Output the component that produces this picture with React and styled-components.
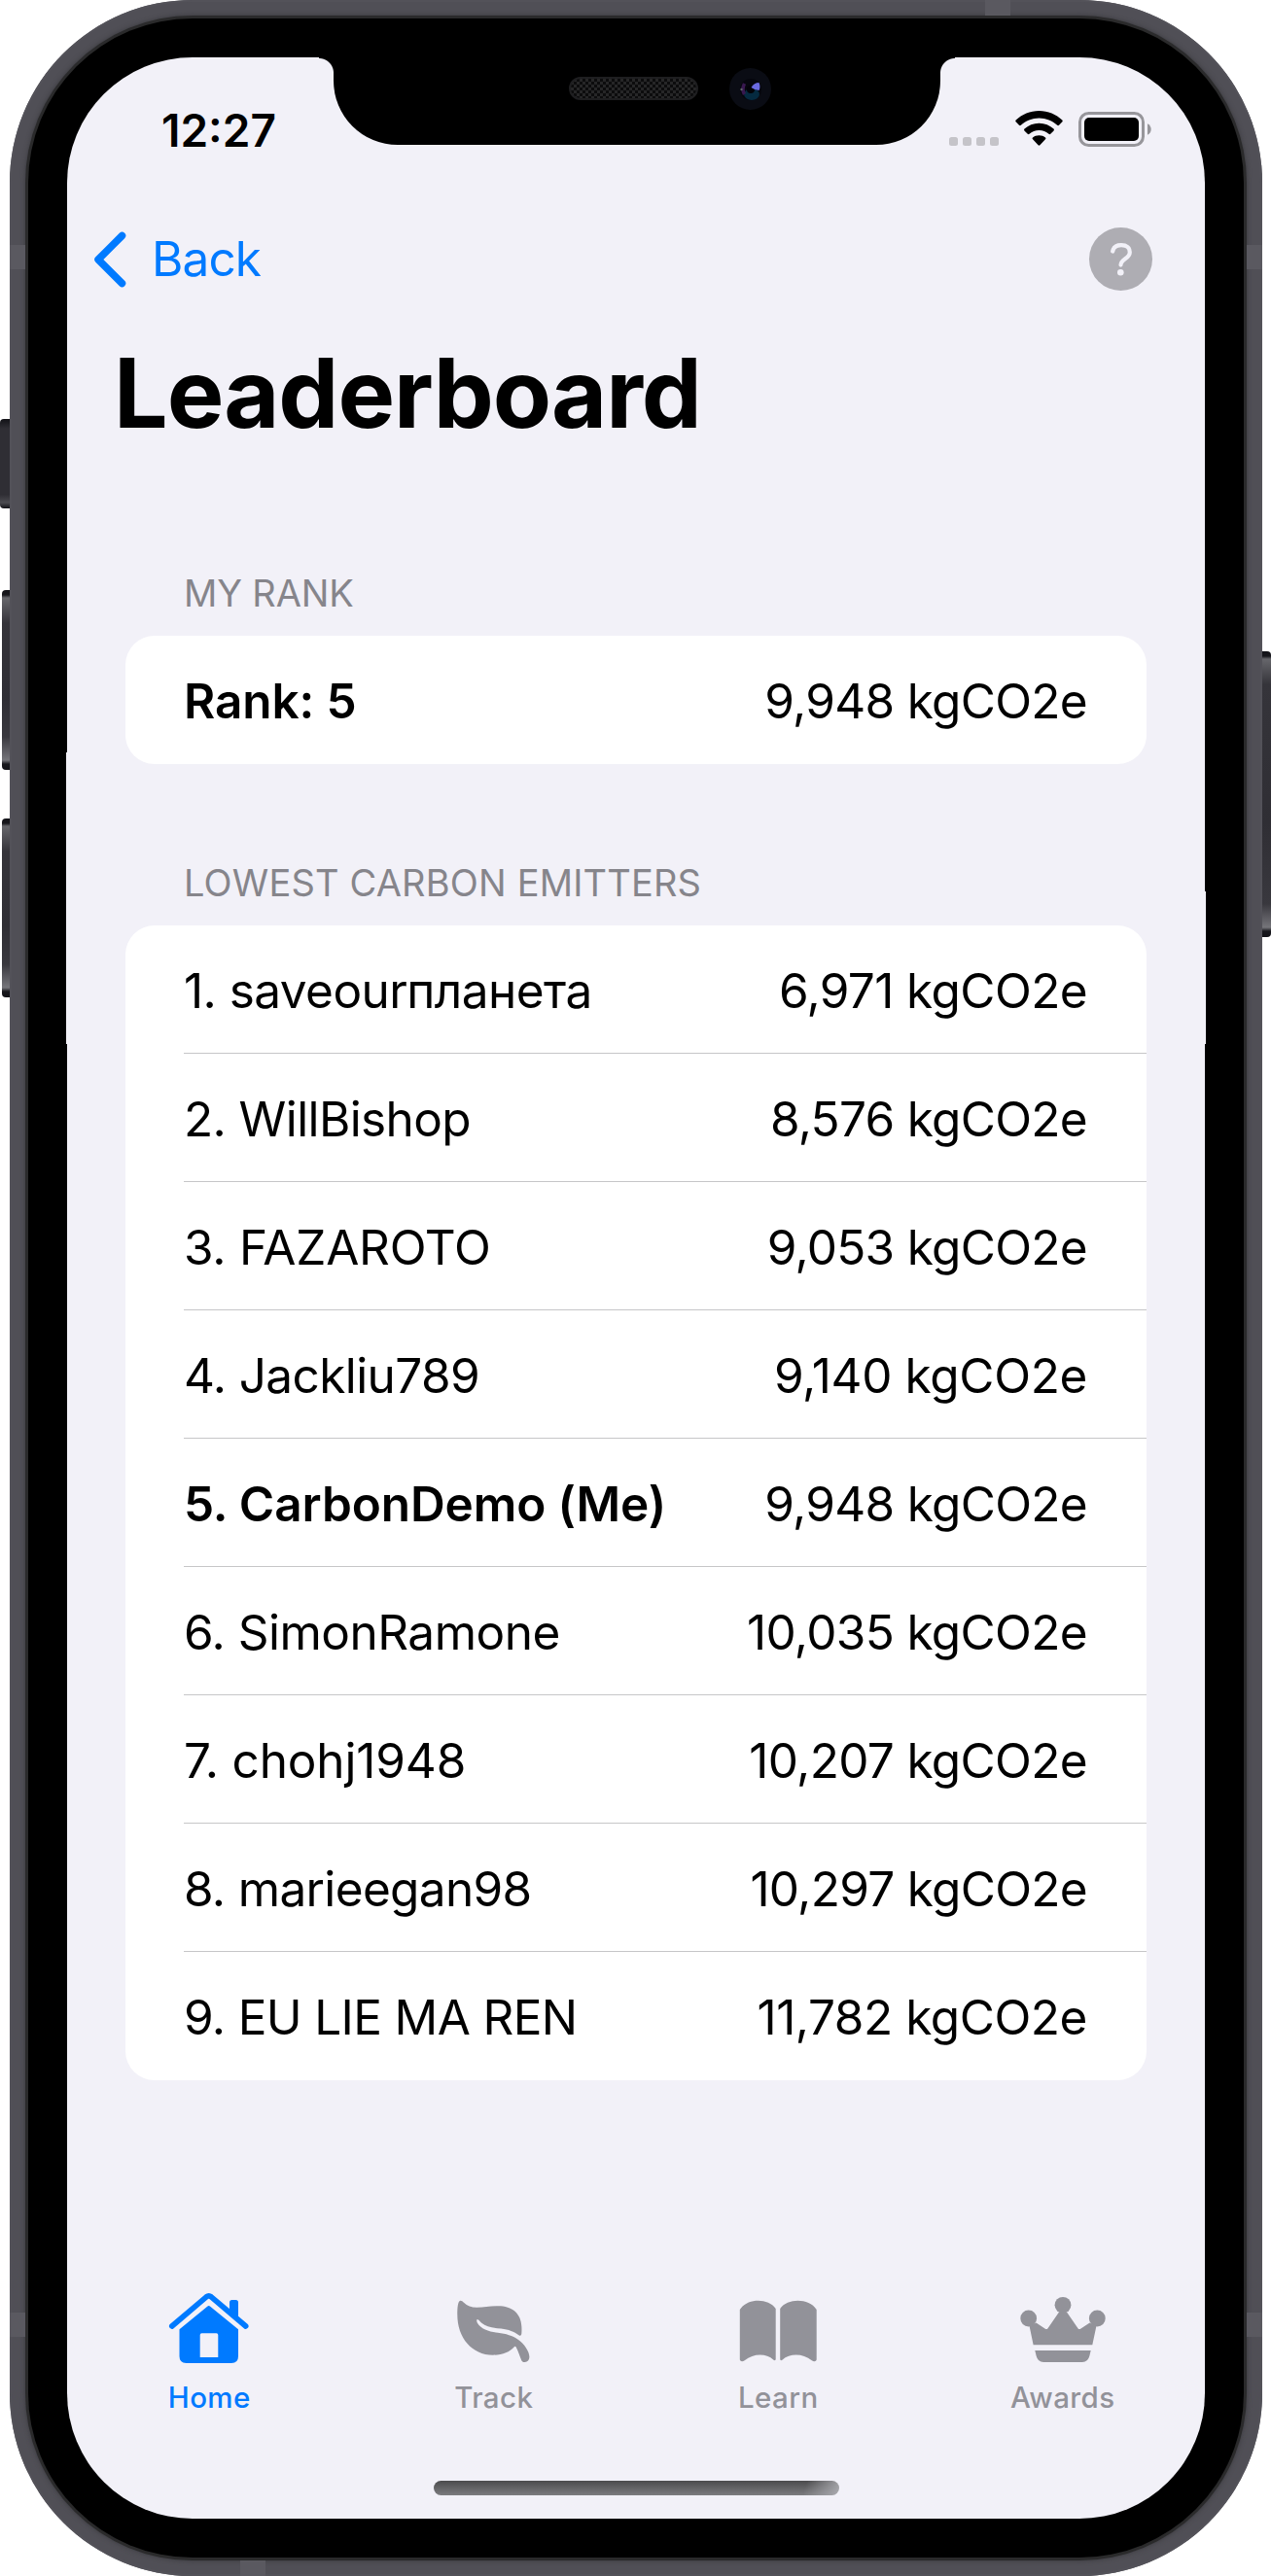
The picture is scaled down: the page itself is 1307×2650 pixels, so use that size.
import React from 'react';
import styled, { createGlobalStyle } from 'styled-components';

const GlobalStyle = createGlobalStyle`
  * { box-sizing: border-box; }
  body { margin: 0; background: #fff; font-family: Inter, "Liberation Sans", sans-serif; color: #000; }
  svg { display: block; }
`;

const Device = styled.div`
  position: relative;
  width: 1307px;
  height: 2650px;
  padding: 0 9px 0 10px;
  overflow: hidden;
`;

const SideButton = styled.span`
  position: absolute;
  top: ${(p) => p.$top}px;
  height: ${(p) => p.$height}px;
  width: ${(p) => p.$width}px;
  ${(p) => (p.$right ? 'right: 0; border-radius: 0 4px 4px 0;' : `left: ${11 - p.$width}px; border-radius: 4px 0 0 4px;`)}
  background: linear-gradient(180deg, #121217 0, #17171c 5px, #66666b 8px, #35343a 34px, #2f2e34 60%, #39383e calc(100% - 34px), #75757a calc(100% - 10px), #17171c calc(100% - 6px), #121217 100%);
  ${(p) => p.$flat && 'background: linear-gradient(180deg, #121217 0, #2f2e34 10px, #2f2e34 calc(100% - 14px), #4b4b50 calc(100% - 6px), #121217 100%);'}
`;

const Frame = styled.div`
  position: relative;
  height: 2650px;
  padding: 16px;
  border-radius: 188px;
  background: #504f56;
  box-shadow: inset 0 0 0 2px #535259;
`;

const Antenna = styled.span`
  position: absolute;
  background: #5a5960;
  ${(p) => (p.$edge === 'top' || p.$edge === 'bottom' ? 'width: 26px; height: 16px;' : 'width: 16px; height: 25px;')}
  ${(p) => p.$edge}: 0;
  ${(p) => (p.$edge === 'top' || p.$edge === 'bottom' ? 'left' : 'top')}: ${(p) => p.$at}px;
`;

const Rim = styled.div`
  height: 100%;
  padding: 3px;
  border-radius: 172px;
  background: #2a2a2b;
  box-shadow: 0 0 5px #38383c;
`;

const Bezel = styled.div`
  height: 100%;
  padding: 40px;
  border-radius: 169px;
  background: #000;
`;

const Screen = styled.main`
  position: relative;
  height: 100%;
  border-radius: 129px;
  background: #f2f1f8;
  display: flex;
  flex-direction: column;
  &::before, &::after {
    content: '';
    position: absolute;
    width: 1px;
    background: #f2f1f8;
  }
  &::before { left: -1px; top: 715px; height: 300px; }
  &::after { right: -1px; top: 858px; height: 157px; }
`;

const Notch = styled.div`
  position: absolute;
  top: 0;
  left: 274px;
  width: 624px;
  height: 90px;
  border-radius: 0 0 66px 66px;
  background: #000;
  &::before, &::after {
    content: '';
    position: absolute;
    top: 0;
    width: 15px;
    height: 16px;
  }
  &::before { left: -15px; background: radial-gradient(circle at 0 100%, transparent 14.5px, #000 15.5px); }
  &::after { right: -15px; background: radial-gradient(circle at 100% 100%, transparent 14.5px, #000 15.5px); }
`;

const Speaker = styled.span`
  position: absolute;
  left: 242px;
  top: 20px;
  width: 133px;
  height: 24px;
  border-radius: 12px;
  border: 2px solid #1e1e20;
  background: repeating-conic-gradient(#262627 0 25%, #0c0c0d 0 50%) 0 0 / 6px 6px;
`;

const Camera = styled.svg`
  position: absolute;
  left: 407px;
  top: 11px;
`;

const StatusBar = styled.header`
  height: 149px;
  padding: 55px 55px 0 97px;
  display: flex;
  justify-content: space-between;
`;

const Time = styled.time`
  margin-top: 2px;
  height: 36px;
  line-height: 36px;
  font-size: 46px;
  font-weight: 600;
  letter-spacing: 0;
`;

const StatusIcons = styled.div`
  display: flex;
  height: 38px;
  align-items: flex-start;
`;

const Gap = styled.span`
  width: 16px;
`;

const NavBar = styled.nav`
  height: 117px;
  padding: 0 54px 0 26px;
  display: flex;
  align-items: center;
  justify-content: space-between;
`;

const BackLink = styled.div`
  display: flex;
  align-items: center;
  gap: 26px;
  margin-bottom: 2px;
  color: #007aff;
  font-size: 49.5px;
  letter-spacing: -0.9px;
  line-height: 60px;
`;

const HelpButton = styled.div`
  width: 65px;
  height: 65px;
  border-radius: 50%;
  background: #aeadb3;
  display: grid;
  place-items: center;
`;

const Title = styled.h1`
  margin: 20px 0 0 48px;
  height: 120px;
  line-height: 120px;
  font-size: 98.5px;
  font-weight: 700;
  letter-spacing: -1.05px;
  white-space: nowrap;
`;

const Section = styled.section`
  margin: ${(p) => p.$gap}px 60px 0;
`;

const SectionTitle = styled.h2`
  margin: 0;
  padding: 0 60px;
  height: 66px;
  line-height: 44px;
  font-size: 38px;
  font-weight: 400;
  letter-spacing: ${(p) => p.$spacing}px;
  color: #86858b;
  white-space: nowrap;
`;

const Card = styled.div`
  border-radius: 30px;
  background: #fff;
  overflow: hidden;
`;

const Row = styled.div`
  margin-left: 60px;
  height: 132px;
  padding: 1px 61px 0 0;
  display: flex;
  align-items: center;
  justify-content: space-between;
  font-size: 49.5px;
  line-height: 60px;
  white-space: nowrap;
  &:not(:last-child) { box-shadow: inset 0 -1px #c6c6c8; }
`;

const Name = styled.span`
  font-weight: ${(p) => (p.$me ? 600 : 400)};
  letter-spacing: ${(p) => p.$spacing}px;
`;

const Amount = styled.span`
  letter-spacing: ${(p) => p.$spacing}px;
`;

const TabBar = styled.footer`
  margin-top: auto;
  height: 251px;
  display: grid;
  grid-template-columns: repeat(4, 1fr);
  padding-top: 16px;
`;

const Tab = styled.div`
  display: flex;
  flex-direction: column;
  align-items: center;
  color: ${(p) => (p.$active ? '#007aff' : '#929299')};
  font-size: 29.5px;
  font-weight: 500;
  line-height: 36px;
  letter-spacing: 0.4px;
  svg { margin-bottom: 12px; }
`;

const HomeIndicator = styled.span`
  position: absolute;
  left: 377px;
  bottom: 24px;
  width: 417px;
  height: 15px;
  border-radius: 8px;
  background: linear-gradient(110deg, transparent 91%, #a9a9ae 100%), linear-gradient(180deg, #4b4b4d, #7c7c7f);
`;

const SignalIcon = () => (
  <svg width="52" height="36" viewBox="0 0 52 36" fill="#c5c4c9">
    {[0, 14, 28, 42].map((x) => <rect key={x} x={x} y="27" width="9" height="9" rx="2.500" />)}
  </svg>
);

const WifiIcon = () => (
  <svg width="49" height="36" viewBox="0 0 49 36">
    <path d="M24.5 0C15.300 0 6.900 3.600.7 9.500c-.6.600-.6 1.200-.1 1.800l3.400 3.500c.6.600 1.200.6 1.800 0C10.700 10.200 17.200 7.400 24.500 7.400s13.800 2.800 18.700 7.400c.6.600 1.200.6 1.800 0l3.400-3.500c.5-.6.500-1.200-.1-1.800C42.100 3.600 33.700 0 24.500 0zm0 12.800c-5.800 0-11.100 2.200-15 5.800-.6.600-.6 1.200-.1 1.800l3.300 3.300c.6.600 1.200.6 1.800 0 2.600-2.400 6.200-3.800 10-3.800s7.400 1.400 10 3.800c.6.600 1.200.6 1.800 0l3.300-3.300c.5-.6.5-1.200-.1-1.800-3.900-3.600-9.200-5.800-15-5.800zm0 12.500c-2.500 0-4.800.8-6.500 2.200-.6.600-.6 1.200 0 1.800l5.600 5.900c.6.600 1.200.6 1.800 0l5.600-5.900c.6-.6.6-1.200 0-1.800-1.700-1.400-4-2.200-6.500-2.200z" />
  </svg>
);

const BatteryIcon = () => (
  <svg width="75" height="37" viewBox="0 0 75 37">
    <rect x="1.500" y="2.500" width="65" height="33" rx="9" fill="none" stroke="#97969b" strokeWidth="3" />
    <rect x="6" y="7" width="56" height="24" rx="5" />
    <path d="M71 13.200c2.400 1.200 3.700 3.300 3.700 5.800s-1.300 4.600-3.700 5.800z" fill="#97969b" />
  </svg>
);

const ChevronIcon = () => (
  <svg width="35" height="60" viewBox="0 0 35 60">
    <path d="M30.500 6.500 6 31l24.500 24.500" fill="none" stroke="currentColor" strokeWidth="7.500" strokeLinecap="round" strokeLinejoin="round" />
  </svg>
);

const QuestionIcon = () => (
  <svg width="24" height="36" viewBox="0 0 24 36">
    <path d="M3.200 9.500C4 5.500 7 3.200 12 3.200c5.600 0 8.800 2.900 8.800 7.200 0 6.800-9.300 6.800-9.300 13.200" fill="none" stroke="#f2f1f8" strokeWidth="4.200" strokeLinecap="round" />
    <circle cx="11.300" cy="31.200" r="3.300" fill="#f2f1f8" />
  </svg>
);

const HomeIcon = () => (
  <svg width="84" height="80" viewBox="0 0 84 80" fill="currentColor">
    <path d="M3.800 37 39.200 6.800q2.500-2 5 0L79.700 37" fill="none" stroke="currentColor" strokeWidth="5.600" strokeLinecap="round" />
    <path d="M63 22.500V12.500q0-2.500 2.500-2.500h4q2.500 0 2.500 2.500V30z" />
    <path fillRule="evenodd" d="M40.200 16.700 11.500 40.200V68q0 7 7 7h46.500q7 0 7-7V40.200L43.200 16.700q-1.500-1.200-3 0zM34.500 44.300h15q1.800 0 1.800 1.800V69H32.700V46.100q0-1.800 1.800-1.800z" />
  </svg>
);

const LeafIcon = () => (
  <svg width="84" height="80" viewBox="0 0 84 80" fill="currentColor">
    <path d="M7.300 10.700C4.800 11.200 4.300 18 4.300 25c0 24 15 41.700 36.700 41.700 10 0 17-3.200 21.600-8.200.8-.9 1.600-.9 2.200.2 2.400 4.300 3.800 9.800 5.400 13.300.6 1.600 1.800 2.100 3.600 2 2.600-.2 4.600-2.200 4.600-5.200 0-5.800-5.400-13.600-11.700-18C61 46.800 54.500 44.800 46 43.800c-7.500-.9-17.500-3.300-21.200-10.300-1-2-.5-3.500 0-3.600 1.400-.2 2.500 2.200 4.500 3.900 4.700 4.200 11.500 4.800 20 5.700 8 .9 13.300 3.200 18.200 6.800 1.500 1.100 2.600.3 2.800-1.500.2-2 .2-4.500.1-7C69.900 24 61 16.300 46 16.300c-8 0-13.700 1.500-21.700 1.500-5.800 0-9.800-1.600-13.300-5-1.400-1.400-2.500-2.400-3.700-2.100z" />
  </svg>
);

const BookIcon = () => (
  <svg width="84" height="80" viewBox="0 0 84 80" fill="currentColor">
    <path d="M2.800 20C10.500 8 32 8 39.700 19v52c0 1.200-1.300 1.500-2.200.7-8-7-20.500-6.700-29.800.5-2.400 1.800-4.900 1-4.900-1.200zM44.200 19C52 8 73.800 8 81.700 20v51c0 2.200-2.500 3-4.900 1.200-9.300-7.200-22.300-7.500-30.400-.5-.9.800-2.200.5-2.200-.7z" />
  </svg>
);

const CrownIcon = () => (
  <svg width="88" height="80" viewBox="0 0 88 80" fill="currentColor">
    <circle cx="44" cy="15.300" r="8.400" />
    <circle cx="8.700" cy="29" r="8.400" />
    <circle cx="79.300" cy="29" r="8.400" />
    <path d="M40 22.500 28.500 39.200q-1.200 1.500-2.600.5L16.500 33.500 9.600 37l4 19.300h60.700L78.400 37l-6.800-3.500-9.500 6.200q-1.400 1-2.600-.5L48 22.500zM15.300 62h57.400l-1.300 5.500q-1.600 6.500-7.400 6.500H24q-5.800 0-7.400-6.500z" />
  </svg>
);

const leaders = [
  { name: '1. saveourпланета', amount: '6,971', track: [-0.55, -0.6] },
  { name: '2. WillBishop', amount: '8,576', track: [-0.6, -0.7] },
  { name: '3. FAZAROTO', amount: '9,053', track: [-0.25, -0.7] },
  { name: '4. Jackliu789', amount: '9,140', track: [-0.6, -0.35] },
  { name: '5. CarbonDemo (Me)', amount: '9,948', track: [-0.1, -0.7], me: true },
  { name: '6. SimonRamone', amount: '10,035', track: [-0.5, -0.65] },
  { name: '7. chohj1948', amount: '10,207', track: [-0.15, -0.65] },
  { name: '8. marieegan98', amount: '10,297', track: [-0.65, -0.7] },
  { name: '9. EU LIE MA REN', amount: '11,782', track: [-0.65, -0.45] },
];

const tabs = [['Home', HomeIcon], ['Track', LeafIcon], ['Learn', BookIcon], ['Awards', CrownIcon]];

export default function App() {
  return (
    <>
      <GlobalStyle />
      <Device>
        <SideButton $top={431} $height={92} $width={11} $flat />
        <SideButton $top={607} $height={185} $width={9} />
        <SideButton $top={842} $height={184} $width={9} />
        <SideButton $top={670} $height={294} $width={10} $right />
        <Frame>
          <Antenna $edge="top" $at={1003} />
          <Antenna $edge="bottom" $at={237} />
          <Antenna $edge="left" $at={252} />
          <Antenna $edge="left" $at={2379} />
          <Antenna $edge="right" $at={252} />
          <Antenna $edge="right" $at={2379} />
          <Rim>
            <Bezel>
              <Screen>
                <Notch>
                  <Speaker />
                  <Camera width="43" height="43" viewBox="0 0 43 43">
                    <circle cx="21.500" cy="21.500" r="21.500" fill="#0a0c14" />
                    <circle cx="22" cy="22" r="11" fill="#05060d" />
                    <ellipse cx="23" cy="27" rx="8" ry="6" fill="#052a40" />
                    <path d="M15.500 16q-3 6 0 11" fill="none" stroke="#38184f" strokeWidth="3.500" />
                    <circle cx="22" cy="22" r="4" fill="#020208" />
                    <path d="M22.500 20q3-5 8-5 2 4.500 0 8-4 0-8-3z" fill="#6a6ae0" />
                    <circle cx="12.500" cy="22" r="1.200" fill="#5d6468" />
                  </Camera>
                </Notch>
                <StatusBar>
                  <Time>12:27</Time>
                  <StatusIcons>
                    <SignalIcon />
                    <Gap />
                    <WifiIcon />
                    <Gap />
                    <BatteryIcon />
                  </StatusIcons>
                </StatusBar>
                <NavBar>
                  <BackLink><ChevronIcon />Back</BackLink>
                  <HelpButton><QuestionIcon /></HelpButton>
                </NavBar>
                <Title>Leaderboard</Title>
                <Section $gap={123}>
                  <SectionTitle $spacing={-0.15}>MY RANK</SectionTitle>
                  <Card>
                    <Row><Name $me $spacing={-0.1}>Rank: 5</Name><Amount $spacing={-0.7}>9,948 kgCO2e</Amount></Row>
                  </Card>
                </Section>
                <Section $gap={100}>
                  <SectionTitle $spacing={0.17}>LOWEST CARBON EMITTERS</SectionTitle>
                  <Card>
                    {leaders.map(({ name, amount, track, me }) => (
                      <Row key={name}>
                        <Name $me={me} $spacing={track[0]}>{name}</Name>
                        <Amount $spacing={track[1]}>{amount} kgCO2e</Amount>
                      </Row>
                    ))}
                  </Card>
                </Section>
                <TabBar>
                  {tabs.map(([label, Icon], i) => <Tab key={label} $active={i === 0}><Icon />{label}</Tab>)}
                </TabBar>
                <HomeIndicator />
              </Screen>
            </Bezel>
          </Rim>
        </Frame>
      </Device>
    </>
  );
}
